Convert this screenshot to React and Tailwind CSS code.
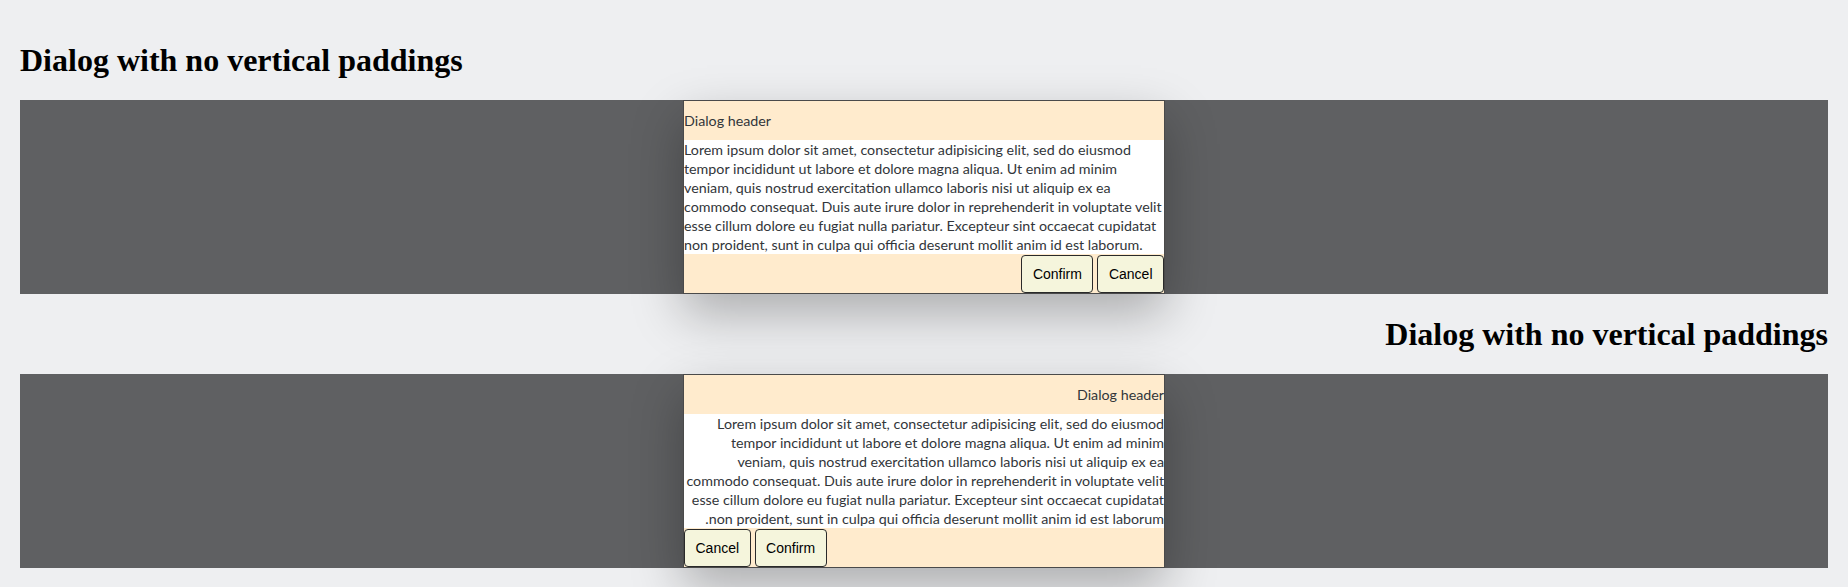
import React from 'react';

const lorem =
  'Lorem ipsum dolor sit amet, consectetur adipisicing elit, sed do eiusmod tempor incididunt ut labore et dolore magna aliqua. Ut enim ad minim veniam, quis nostrud exercitation ullamco laboris nisi ut aliquip ex ea commodo consequat. Duis aute irure dolor in reprehenderit in voluptate velit esse cillum dolore eu fugiat nulla pariatur. Excepteur sint occaecat cupidatat non proident, sunt in culpa qui officia deserunt mollit anim id est laborum.';

function DialogButton({ children }) {
  return (
    <button className="h-[38px] px-[10.5px] pt-[1px] bg-[#f5f5dc] border border-[#2a2a2a] rounded-[4px] text-[14px] text-black font-['Liberation_Sans',Arial,sans-serif]">
      {children}
    </button>
  );
}

function DialogDemo({ rtl }) {
  return (
    <div className="relative h-[194px] bg-[#5f6062] flex justify-center">
      <div
        dir={rtl ? 'rtl' : 'ltr'}
        className="w-[482px] h-full flex flex-col border border-[#4a4a4a] bg-[#ffebcd] text-[#32363a] font-['Lato',sans-serif] text-[14.28px] shadow-[0_20px_48px_rgba(0,0,0,0.28)]"
      >
        {/* header */}
        <div className="h-[39px] flex items-center">Dialog header</div>

        {/* body - no vertical paddings */}
        <div className="h-[114px] bg-white leading-[19px] overflow-hidden">{lorem}</div>

        {/* footer */}
        <div className="flex-1 flex justify-end items-center gap-[4px]">
          <DialogButton>Confirm</DialogButton>
          <DialogButton>Cancel</DialogButton>
        </div>
      </div>
    </div>
  );
}

export default function App() {
  return (
    <div className="min-h-[587px] bg-[#eeeff1] px-[20px] pt-[42px] pb-[19px]">
      <h1 className="text-[32px] leading-[37px] font-bold font-['Liberation_Serif','Times_New_Roman',serif] text-black mb-[21px]">
        Dialog with no vertical paddings
      </h1>
      <DialogDemo />

      <h1
        dir="rtl"
        className="text-[32px] leading-[37px] font-bold font-['Liberation_Serif','Times_New_Roman',serif] text-black mt-[22px] mb-[21px]"
      >
        Dialog with no vertical paddings
      </h1>
      <DialogDemo rtl />
    </div>
  );
}
